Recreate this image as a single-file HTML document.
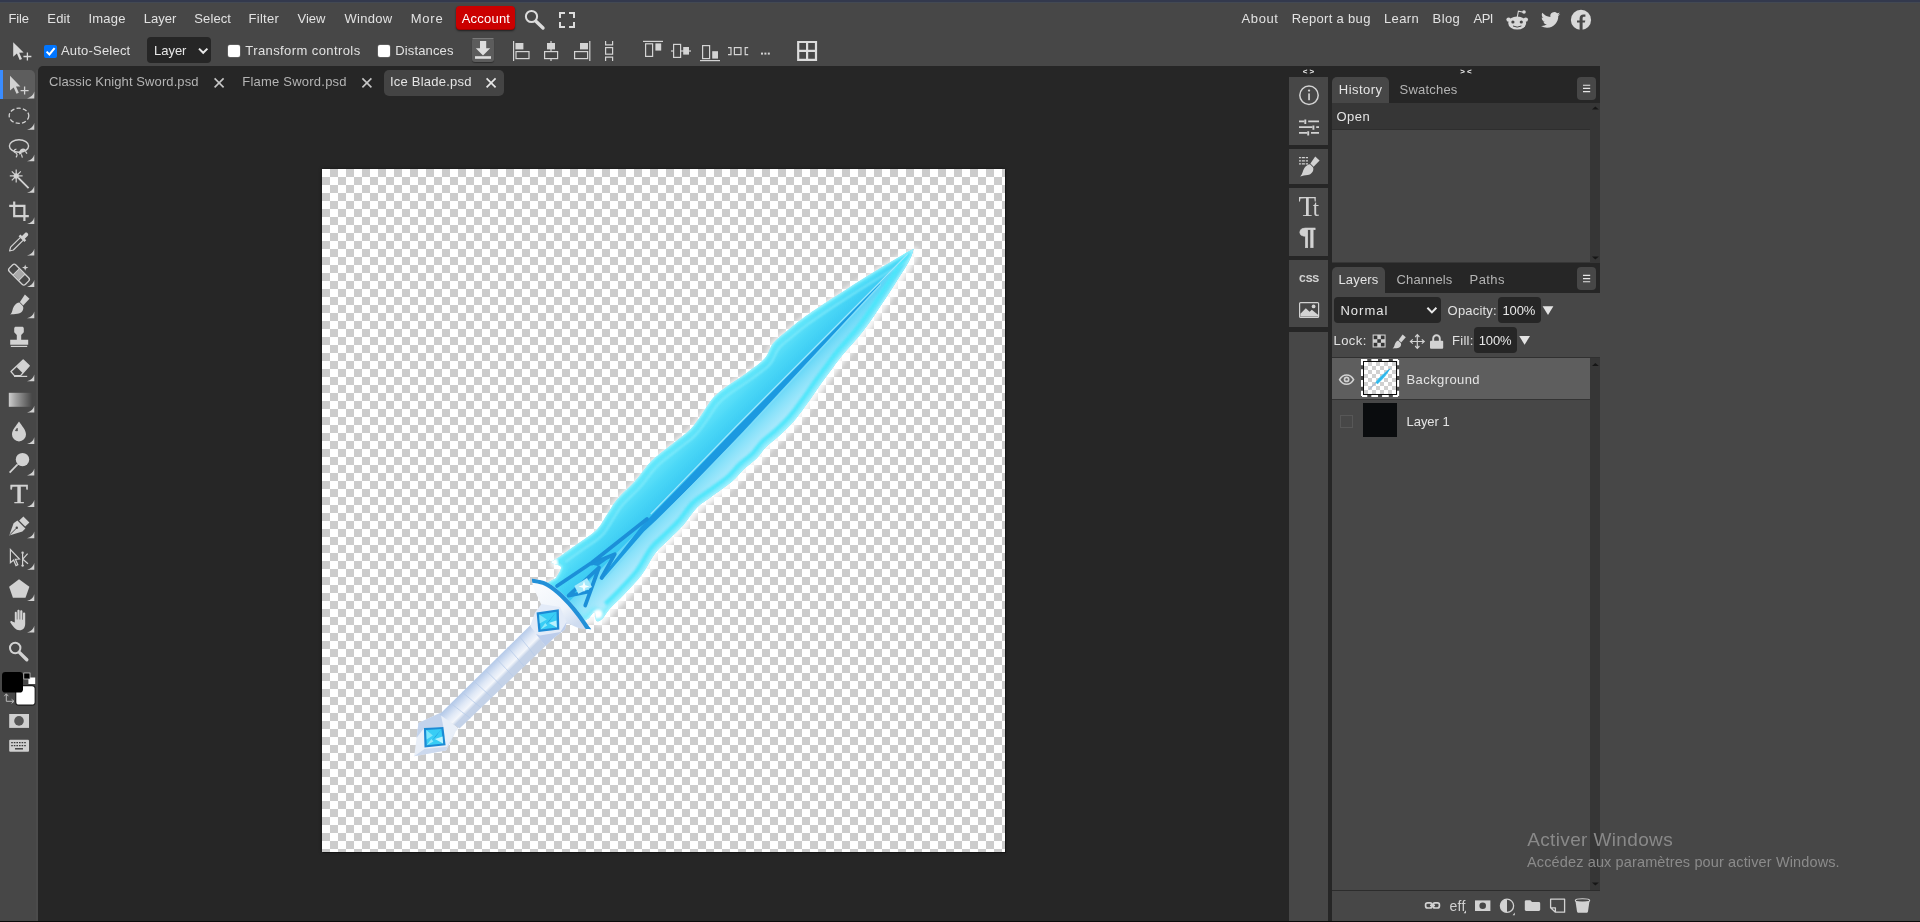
<!DOCTYPE html>
<html lang="en"><head><meta charset="utf-8"><title>Photopea</title>
<style>
html,body{margin:0;padding:0}
body{width:1920px;height:922px;overflow:hidden;background:#474747;position:relative;font-family:"Liberation Sans",sans-serif}
.b{position:absolute}
.t{position:absolute;white-space:pre;line-height:20px;font-family:"Liberation Sans",sans-serif}
svg{position:absolute;overflow:visible}

</style></head>
<body>
<!-- window top strip -->
<div class="b" style="left:0;top:0;width:1920px;height:2px;background:#33394d"></div>
<div class="b" style="left:0;top:2px;width:1920px;height:1px;background:#434953"></div>
<!-- dark workspace -->
<div class="b" style="left:38px;top:66px;width:1562px;height:856px;background:#262626;border-top-left-radius:5px"></div>
<div class="b" style="left:36px;top:70px;width:2px;height:852px;background:#4b4b4b"></div>
<!-- account button -->
<div class="b" style="left:456px;top:6px;width:59px;height:24px;background:#cb0000;border-radius:4px;box-shadow:0 1px 2px rgba(0,0,0,.55), inset 0 -1px 0 rgba(0,0,0,.18)"></div>
<!-- options bar controls -->
<div class="b" style="left:44px;top:45px;width:13px;height:13px;background:#0075ff;border-radius:2px"></div>
<div class="b" style="left:147px;top:37px;width:64px;height:26px;background:#262626;border-radius:4px"></div>
<div class="b" style="left:228px;top:45px;width:12px;height:12px;background:#fff;border-radius:2px;box-shadow:0 0 0 .5px #767676"></div>
<div class="b" style="left:378px;top:45px;width:12px;height:12px;background:#fff;border-radius:2px;box-shadow:0 0 0 .5px #767676"></div>
<div class="b" style="left:472px;top:38px;width:22px;height:24px;background:#5c5c5c;border-radius:3px;box-shadow:0 1px 1px rgba(0,0,0,.35)"></div>
<!-- active tool highlight -->
<div class="b" style="left:0;top:70px;width:35px;height:29px;background:#5d5d5d;border-radius:0 5px 5px 0"></div>
<div class="b" style="left:0;top:70px;width:3px;height:29px;background:#3a8cff"></div>
<!-- document tabs -->
<div class="b" style="left:384px;top:70px;width:120px;height:26px;background:#444444;border-radius:5px"></div>
<!-- canvas -->
<div class="b" style="left:322px;top:169px;width:683px;height:683px;background-color:#fff;background-image:conic-gradient(#ccc 0 25%,#fff 0 50%,#ccc 0 75%,#fff 0);background-size:16px 16px;box-shadow:1px 1px 0 #151515, 0 0 3px rgba(0,0,0,.5)"></div>
<!-- right icon column -->
<div class="b" style="left:1289px;top:77px;width:39px;height:68px;background:#474747"></div>
<div class="b" style="left:1289px;top:149px;width:39px;height:35px;background:#474747"></div>
<div class="b" style="left:1289px;top:188px;width:39px;height:68px;background:#474747"></div>
<div class="b" style="left:1289px;top:260px;width:39px;height:67px;background:#474747"></div>
<div class="b" style="left:1289px;top:332px;width:39px;height:589px;background:#474747"></div>
<!-- history panel -->
<div class="b" style="left:1332px;top:77px;width:57px;height:26px;background:#474747;border-radius:5px 5px 0 0"></div>
<div class="b" style="left:1577px;top:77px;width:19px;height:23px;background:#474747;border-radius:4px"></div>
<div class="b" style="left:1332px;top:103px;width:268px;height:160px;background:#363636"></div>
<div class="b" style="left:1332px;top:130px;width:258px;height:132px;background:#474747"></div>
<div class="b" style="left:1332px;top:129px;width:258px;height:1px;background:#2e2e2e"></div>
<!-- layers panel -->
<div class="b" style="left:1332px;top:267px;width:53px;height:26px;background:#474747;border-radius:5px 5px 0 0"></div>
<div class="b" style="left:1577px;top:267px;width:19px;height:23px;background:#474747;border-radius:4px"></div>
<div class="b" style="left:1332px;top:293px;width:268px;height:628px;background:#474747"></div>
<div class="b" style="left:1334px;top:297px;width:107px;height:26px;background:#262626;border-radius:4px"></div>
<div class="b" style="left:1498px;top:297px;width:43px;height:26px;background:#262626;border-radius:4px"></div>
<div class="b" style="left:1474px;top:327px;width:43px;height:26px;background:#262626;border-radius:4px"></div>
<!-- layer list -->
<div class="b" style="left:1332px;top:357px;width:268px;height:1px;background:#303030"></div>
<div class="b" style="left:1332px;top:358px;width:258px;height:41px;background:#5e5e5e"></div>
<div class="b" style="left:1332px;top:399px;width:258px;height:1px;background:#333"></div>
<div class="b" style="left:1590px;top:358px;width:10px;height:532px;background:#363636"></div>
<div class="b" style="left:1332px;top:890px;width:268px;height:1px;background:#2c2c2c"></div>
<!-- layer thumbs -->
<div class="b" style="left:1361px;top:359px;width:38px;height:38px;background:#4d4d4d"></div>
<div class="b" style="left:1363px;top:361px;width:34px;height:34px;background:#0c0c0c"></div>
<div class="b" style="left:1364px;top:362px;width:32px;height:32px;background-color:#fff;background-image:conic-gradient(#d0d0d0 0 25%,#fff 0 50%,#d0d0d0 0 75%,#fff 0);background-size:8px 8px"></div>
<div class="b" style="left:1363px;top:403px;width:34px;height:34px;background:#0a0c0e"></div>
<div class="b" style="left:1340px;top:415px;width:13px;height:13px;border:1px solid #575757;box-sizing:border-box"></div>
<!-- bottom edge -->
<div class="b" style="left:0;top:921px;width:1920px;height:1px;background:#0b0b0b"></div>

<svg style="left:322px;top:169px" width="683" height="683" viewBox="322 169 683 683">
<defs>
<clipPath id="bc"><path d="M556.0 578.0C556.8 576.2 561.8 569.6 561.0 567.0C560.2 564.4 551.7 564.3 551.5 562.5C551.3 560.7 555.7 559.5 560.0 556.4C564.3 553.3 571.2 548.4 577.3 544.0C583.4 539.6 591.3 535.2 596.4 530.0C601.5 524.8 604.5 518.2 608.0 513.0C611.5 507.8 612.9 504.2 617.4 499.0C621.9 493.8 629.8 487.1 634.7 481.6C639.6 476.1 643.5 470.1 647.0 466.0C650.5 461.9 651.2 461.1 655.5 457.3C659.8 453.5 667.2 448.0 673.0 443.4C678.8 438.8 685.4 434.4 690.2 429.5C695.0 424.6 698.3 419.2 702.0 414.0C705.7 408.8 708.8 402.8 712.6 398.5C716.4 394.2 718.9 392.3 724.7 388.0C730.5 383.7 740.6 377.4 747.3 372.5C753.9 367.6 760.3 363.5 764.6 358.6C768.9 353.7 769.5 347.6 773.3 343.0C777.1 338.4 782.3 334.9 787.2 330.8C792.1 326.7 795.1 323.9 802.6 318.5C810.1 313.1 819.6 306.7 832.0 298.6C844.4 290.5 863.6 278.3 877.2 270.0C890.8 261.7 907.5 252.3 913.6 248.8L913.6 248.8C912.8 251.0 913.1 253.8 908.5 262.0C903.9 270.1 893.5 286.2 886.0 297.7C878.5 309.1 870.6 321.1 863.3 330.7C856.0 340.3 847.5 348.7 842.0 355.5C836.5 362.3 833.9 366.3 830.0 371.6C826.1 376.9 821.9 382.5 818.5 387.2C815.1 391.9 813.9 394.4 809.8 400.0C805.7 405.6 799.0 415.2 794.0 421.0C789.0 426.8 784.7 430.7 780.0 435.0C775.3 439.3 769.8 443.2 766.0 447.0C762.2 450.8 760.7 454.3 757.0 458.0C753.3 461.7 748.2 465.1 744.0 469.0C739.8 472.9 737.5 476.9 732.0 481.6C726.5 486.3 716.8 492.7 711.0 497.0C705.2 501.3 701.6 502.9 697.0 507.6C692.4 512.3 687.9 519.8 683.3 525.0C678.7 530.2 674.0 534.3 669.4 538.9C664.8 543.5 660.1 546.7 655.5 552.7C650.9 558.7 646.8 568.0 641.5 575.0C636.2 582.0 629.2 588.9 624.0 594.5C618.8 600.1 613.7 604.3 610.0 608.4C606.3 612.5 604.3 616.9 602.0 619.0C599.7 621.1 597.6 622.0 596.4 620.8C595.2 619.6 595.8 612.5 594.6 612.0C593.4 611.5 589.9 617.0 589.0 618.0L583 622L567 608L554 595L545 584Z"/></clipPath>
<clipPath id="gc"><path d="M531.7 578.4C534.1 579.0 541.3 579.7 545.8 581.7C550.3 583.7 554.6 587.0 558.8 590.4C562.9 593.8 567.1 598.3 570.7 602.3C574.3 606.3 577.6 610.4 580.5 614.2C583.4 618.0 586.2 622.5 588.0 625.0C589.8 627.5 590.8 628.7 591.3 629.4L591.3 629.4C589.3 629.2 583.2 629.2 579.4 628.3C575.6 627.4 571.8 624.4 568.6 624.0C565.4 623.6 563.4 627.0 560.0 626.0C556.6 625.0 551.1 621.5 548.0 618.0C544.9 614.5 543.1 608.3 541.5 605.0C539.9 601.7 539.6 601.0 538.2 598.0C536.8 595.0 534.4 590.3 533.3 587.0C532.2 583.7 532.0 579.8 531.7 578.4Z"/></clipPath>
<clipPath id="pc"><path d="M530.6 625.0L439.5 714.5L459.5 728.5L545.8 645.7Z"/></clipPath>
<linearGradient id="gu" gradientUnits="userSpaceOnUse" x1="676" y1="445" x2="700" y2="469">
<stop offset="0" stop-color="#62e4fa"/><stop offset=".5" stop-color="#47d5f6"/><stop offset="1" stop-color="#3ac8f2"/></linearGradient>
<linearGradient id="gl" gradientUnits="userSpaceOnUse" x1="700" y1="469" x2="724" y2="493">
<stop offset="0" stop-color="#62d6f7"/><stop offset=".35" stop-color="#8ae2fa"/><stop offset=".75" stop-color="#b0eafc"/><stop offset="1" stop-color="#bdf0fd"/></linearGradient>
<linearGradient id="gg" gradientUnits="userSpaceOnUse" x1="480" y1="666" x2="497" y2="683">
<stop offset="0" stop-color="#9db8df"/><stop offset=".35" stop-color="#bdd0ec"/><stop offset=".62" stop-color="#dfe8f6"/><stop offset=".86" stop-color="#f3f6fb"/><stop offset="1" stop-color="#c4d2e8"/></linearGradient>
<linearGradient id="gd" gradientUnits="userSpaceOnUse" x1="545" y1="585" x2="575" y2="625">
<stop offset="0" stop-color="#f9fbfe"/><stop offset=".6" stop-color="#eef3fa"/><stop offset="1" stop-color="#cfdcf0"/></linearGradient>
<linearGradient id="gm" x1="0" y1="0" x2="1" y2="1">
<stop offset="0" stop-color="#7fe6fb"/><stop offset=".45" stop-color="#35b4ea"/><stop offset=".55" stop-color="#2aa2e2"/><stop offset="1" stop-color="#b5f1fd"/></linearGradient>
<filter id="soft" x="-5%" y="-5%" width="110%" height="110%"><feGaussianBlur stdDeviation=".6"/></filter>
<filter id="b3" x="-10%" y="-10%" width="120%" height="120%"><feGaussianBlur stdDeviation="2.5"/></filter>
<filter id="b1" x="-10%" y="-10%" width="120%" height="120%"><feGaussianBlur stdDeviation="1"/></filter>
</defs>
<g filter="url(#soft)">
<path d="M440.5 712.8L418.5 723.0L414.2 756.2L446.0 750.5L455.7 731.5L458.5 728.5Z" fill="#e9eff8"/>
<path d="M440.5 712.8L418.5 723.0L416.5 738.0L424.0 728.0L443.4 726.9Z" fill="#c3d3ec"/>
<path d="M414.2 756.2L446.0 750.5L455.7 731.5L447.0 746.8L424.5 749.0Z" fill="#ccd9ee"/>
<path d="M530.6 625.0L439.5 714.5L459.5 728.5L545.8 645.7Z" fill="url(#gg)"/>
<path d="M519.2 636.2Q529.1 648.1 535.0 656.1M507.8 647.4Q518.0 658.9 524.2 666.4M496.4 658.6Q506.9 669.7 513.4 676.8M485.1 669.8Q495.9 680.4 502.6 687.1M473.7 680.9Q484.8 691.2 491.9 697.5M462.3 692.1Q473.7 702.0 481.1 707.8M450.9 703.3Q462.6 712.7 470.3 718.1" fill="none" stroke="#b7cbe9" stroke-width="1" opacity=".8"/>
<path d="M423.9 728.0L443.4 726.9L445.6 745.3L424.5 747.5Z" fill="#1d8ad4"/>
<path d="M426.2 730.0L441.4 729.1L443.1 743.5L426.7 745.2Z" fill="#38cdf5"/>
<path d="M441.4 729.1L431.9 740.4L435.9 736.4Z" fill="#1c8fd9"/>
<path d="M443.1 743.5L434.9 738.9L442.6 736.4Z" fill="#b9f2fd"/>
<path d="M426.2 730.0L432.9 735.4L426.7 739.4Z" fill="#7fe6fb"/>
<path d="M426.7 745.2L431.4 738.9L433.4 741.4Z" fill="#8fe9fb"/>
<g transform="translate(1.5 1.5)"><path d="M556.0 578.0C556.8 576.2 561.8 569.6 561.0 567.0C560.2 564.4 551.7 564.3 551.5 562.5C551.3 560.7 555.7 559.5 560.0 556.4C564.3 553.3 571.2 548.4 577.3 544.0C583.4 539.6 591.3 535.2 596.4 530.0C601.5 524.8 604.5 518.2 608.0 513.0C611.5 507.8 612.9 504.2 617.4 499.0C621.9 493.8 629.8 487.1 634.7 481.6C639.6 476.1 643.5 470.1 647.0 466.0C650.5 461.9 651.2 461.1 655.5 457.3C659.8 453.5 667.2 448.0 673.0 443.4C678.8 438.8 685.4 434.4 690.2 429.5C695.0 424.6 698.3 419.2 702.0 414.0C705.7 408.8 708.8 402.8 712.6 398.5C716.4 394.2 718.9 392.3 724.7 388.0C730.5 383.7 740.6 377.4 747.3 372.5C753.9 367.6 760.3 363.5 764.6 358.6C768.9 353.7 769.5 347.6 773.3 343.0C777.1 338.4 782.3 334.9 787.2 330.8C792.1 326.7 795.1 323.9 802.6 318.5C810.1 313.1 819.6 306.7 832.0 298.6C844.4 290.5 863.6 278.3 877.2 270.0C890.8 261.7 907.5 252.3 913.6 248.8L913.6 248.8C912.8 251.0 913.1 253.8 908.5 262.0C903.9 270.1 893.5 286.2 886.0 297.7C878.5 309.1 870.6 321.1 863.3 330.7C856.0 340.3 847.5 348.7 842.0 355.5C836.5 362.3 833.9 366.3 830.0 371.6C826.1 376.9 821.9 382.5 818.5 387.2C815.1 391.9 813.9 394.4 809.8 400.0C805.7 405.6 799.0 415.2 794.0 421.0C789.0 426.8 784.7 430.7 780.0 435.0C775.3 439.3 769.8 443.2 766.0 447.0C762.2 450.8 760.7 454.3 757.0 458.0C753.3 461.7 748.2 465.1 744.0 469.0C739.8 472.9 737.5 476.9 732.0 481.6C726.5 486.3 716.8 492.7 711.0 497.0C705.2 501.3 701.6 502.9 697.0 507.6C692.4 512.3 687.9 519.8 683.3 525.0C678.7 530.2 674.0 534.3 669.4 538.9C664.8 543.5 660.1 546.7 655.5 552.7C650.9 558.7 646.8 568.0 641.5 575.0C636.2 582.0 629.2 588.9 624.0 594.5C618.8 600.1 613.7 604.3 610.0 608.4C606.3 612.5 604.3 616.9 602.0 619.0C599.7 621.1 597.6 622.0 596.4 620.8C595.2 619.6 595.8 612.5 594.6 612.0C593.4 611.5 589.9 617.0 589.0 618.0L583 622L567 608L554 595L545 584Z" fill="#fff" stroke="#ffffff" stroke-width="7" stroke-linejoin="round" filter="url(#b3)" opacity=".85"/></g>
<g clip-path="url(#bc)">
<path d="M556.0 578.0C556.8 576.2 561.8 569.6 561.0 567.0C560.2 564.4 551.7 564.3 551.5 562.5C551.3 560.7 555.7 559.5 560.0 556.4C564.3 553.3 571.2 548.4 577.3 544.0C583.4 539.6 591.3 535.2 596.4 530.0C601.5 524.8 604.5 518.2 608.0 513.0C611.5 507.8 612.9 504.2 617.4 499.0C621.9 493.8 629.8 487.1 634.7 481.6C639.6 476.1 643.5 470.1 647.0 466.0C650.5 461.9 651.2 461.1 655.5 457.3C659.8 453.5 667.2 448.0 673.0 443.4C678.8 438.8 685.4 434.4 690.2 429.5C695.0 424.6 698.3 419.2 702.0 414.0C705.7 408.8 708.8 402.8 712.6 398.5C716.4 394.2 718.9 392.3 724.7 388.0C730.5 383.7 740.6 377.4 747.3 372.5C753.9 367.6 760.3 363.5 764.6 358.6C768.9 353.7 769.5 347.6 773.3 343.0C777.1 338.4 782.3 334.9 787.2 330.8C792.1 326.7 795.1 323.9 802.6 318.5C810.1 313.1 819.6 306.7 832.0 298.6C844.4 290.5 863.6 278.3 877.2 270.0C890.8 261.7 907.5 252.3 913.6 248.8L913.6 248.8C912.8 251.0 913.1 253.8 908.5 262.0C903.9 270.1 893.5 286.2 886.0 297.7C878.5 309.1 870.6 321.1 863.3 330.7C856.0 340.3 847.5 348.7 842.0 355.5C836.5 362.3 833.9 366.3 830.0 371.6C826.1 376.9 821.9 382.5 818.5 387.2C815.1 391.9 813.9 394.4 809.8 400.0C805.7 405.6 799.0 415.2 794.0 421.0C789.0 426.8 784.7 430.7 780.0 435.0C775.3 439.3 769.8 443.2 766.0 447.0C762.2 450.8 760.7 454.3 757.0 458.0C753.3 461.7 748.2 465.1 744.0 469.0C739.8 472.9 737.5 476.9 732.0 481.6C726.5 486.3 716.8 492.7 711.0 497.0C705.2 501.3 701.6 502.9 697.0 507.6C692.4 512.3 687.9 519.8 683.3 525.0C678.7 530.2 674.0 534.3 669.4 538.9C664.8 543.5 660.1 546.7 655.5 552.7C650.9 558.7 646.8 568.0 641.5 575.0C636.2 582.0 629.2 588.9 624.0 594.5C618.8 600.1 613.7 604.3 610.0 608.4C606.3 612.5 604.3 616.9 602.0 619.0C599.7 621.1 597.6 622.0 596.4 620.8C595.2 619.6 595.8 612.5 594.6 612.0C593.4 611.5 589.9 617.0 589.0 618.0L583 622L567 608L554 595L545 584Z" fill="url(#gu)"/>
<path d="M925.0 236.9L540.0 631.5L660.0 751.5L1045.0 366.5Z" fill="url(#gl)"/>
<path d="M556.0 578.0C556.8 576.2 561.8 569.6 561.0 567.0C560.2 564.4 551.7 564.3 551.5 562.5C551.3 560.7 555.7 559.5 560.0 556.4C564.3 553.3 571.2 548.4 577.3 544.0C583.4 539.6 591.3 535.2 596.4 530.0C601.5 524.8 604.5 518.2 608.0 513.0C611.5 507.8 612.9 504.2 617.4 499.0C621.9 493.8 629.8 487.1 634.7 481.6C639.6 476.1 643.5 470.1 647.0 466.0C650.5 461.9 651.2 461.1 655.5 457.3C659.8 453.5 667.2 448.0 673.0 443.4C678.8 438.8 685.4 434.4 690.2 429.5C695.0 424.6 698.3 419.2 702.0 414.0C705.7 408.8 708.8 402.8 712.6 398.5C716.4 394.2 718.9 392.3 724.7 388.0C730.5 383.7 740.6 377.4 747.3 372.5C753.9 367.6 760.3 363.5 764.6 358.6C768.9 353.7 769.5 347.6 773.3 343.0C777.1 338.4 782.3 334.9 787.2 330.8C792.1 326.7 795.1 323.9 802.6 318.5C810.1 313.1 819.6 306.7 832.0 298.6C844.4 290.5 863.6 278.3 877.2 270.0C890.8 261.7 907.5 252.3 913.6 248.8L913.6 248.8C912.8 251.0 913.1 253.8 908.5 262.0C903.9 270.1 893.5 286.2 886.0 297.7C878.5 309.1 870.6 321.1 863.3 330.7C856.0 340.3 847.5 348.7 842.0 355.5C836.5 362.3 833.9 366.3 830.0 371.6C826.1 376.9 821.9 382.5 818.5 387.2C815.1 391.9 813.9 394.4 809.8 400.0C805.7 405.6 799.0 415.2 794.0 421.0C789.0 426.8 784.7 430.7 780.0 435.0C775.3 439.3 769.8 443.2 766.0 447.0C762.2 450.8 760.7 454.3 757.0 458.0C753.3 461.7 748.2 465.1 744.0 469.0C739.8 472.9 737.5 476.9 732.0 481.6C726.5 486.3 716.8 492.7 711.0 497.0C705.2 501.3 701.6 502.9 697.0 507.6C692.4 512.3 687.9 519.8 683.3 525.0C678.7 530.2 674.0 534.3 669.4 538.9C664.8 543.5 660.1 546.7 655.5 552.7C650.9 558.7 646.8 568.0 641.5 575.0C636.2 582.0 629.2 588.9 624.0 594.5C618.8 600.1 613.7 604.3 610.0 608.4C606.3 612.5 604.3 616.9 602.0 619.0C599.7 621.1 597.6 622.0 596.4 620.8C595.2 619.6 595.8 612.5 594.6 612.0C593.4 611.5 589.9 617.0 589.0 618.0L583 622L567 608L554 595L545 584Z" fill="none" stroke="#62eafc" stroke-width="9" stroke-linejoin="round" filter="url(#b3)" opacity=".7"/>
<g transform="translate(5.500 5.500)"><path d="M560.0 556.4C562.9 554.3 571.2 548.4 577.3 544.0C583.4 539.6 591.3 535.2 596.4 530.0C601.5 524.8 604.5 518.2 608.0 513.0C611.5 507.8 612.9 504.2 617.4 499.0C621.9 493.8 629.8 487.1 634.7 481.6C639.6 476.1 643.5 470.1 647.0 466.0C650.5 461.9 651.2 461.1 655.5 457.3C659.8 453.5 667.2 448.0 673.0 443.4C678.8 438.8 685.4 434.4 690.2 429.5C695.0 424.6 698.3 419.2 702.0 414.0C705.7 408.8 708.8 402.8 712.6 398.5C716.4 394.2 718.9 392.3 724.7 388.0C730.5 383.7 740.6 377.4 747.3 372.5C753.9 367.6 760.3 363.5 764.6 358.6C768.9 353.7 769.5 347.6 773.3 343.0C777.1 338.4 782.3 334.9 787.2 330.8C792.1 326.7 795.1 323.9 802.6 318.5C810.1 313.1 819.6 306.7 832.0 298.6C844.4 290.5 863.6 278.3 877.2 270.0C890.8 261.7 907.5 252.3 913.6 248.8" fill="none" stroke="#8aeefc" stroke-width="2" filter="url(#b1)" opacity=".75"/></g>
<g transform="translate(-4.500 -4.500)"><path d="M913.6 248.8C912.8 251.0 913.1 253.8 908.5 262.0C903.9 270.1 893.5 286.2 886.0 297.7C878.5 309.1 870.6 321.1 863.3 330.7C856.0 340.3 847.5 348.7 842.0 355.5C836.5 362.3 833.9 366.3 830.0 371.6C826.1 376.9 821.9 382.5 818.5 387.2C815.1 391.9 813.9 394.4 809.8 400.0C805.7 405.6 799.0 415.2 794.0 421.0C789.0 426.8 784.7 430.7 780.0 435.0C775.3 439.3 769.8 443.2 766.0 447.0C762.2 450.8 760.7 454.3 757.0 458.0C753.3 461.7 748.2 465.1 744.0 469.0C739.8 472.9 737.5 476.9 732.0 481.6C726.5 486.3 716.8 492.7 711.0 497.0C705.2 501.3 701.6 502.9 697.0 507.6C692.4 512.3 687.9 519.8 683.3 525.0C678.7 530.2 674.0 534.3 669.4 538.9C664.8 543.5 660.1 546.7 655.5 552.7C650.9 558.7 646.8 568.0 641.5 575.0C636.2 582.0 629.2 588.9 624.0 594.5C618.8 600.1 612.3 606.1 610.0 608.4" fill="none" stroke="#4ce6fb" stroke-width="4.500" filter="url(#b1)" opacity=".9"/></g>
<path d="M556.0 578.0C556.8 576.2 561.8 569.6 561.0 567.0C560.2 564.4 551.7 564.3 551.5 562.5C551.3 560.7 555.7 559.5 560.0 556.4C564.3 553.3 571.2 548.4 577.3 544.0C583.4 539.6 591.3 535.2 596.4 530.0C601.5 524.8 604.5 518.2 608.0 513.0C611.5 507.8 612.9 504.2 617.4 499.0C621.9 493.8 629.8 487.1 634.7 481.6C639.6 476.1 643.5 470.1 647.0 466.0C650.5 461.9 651.2 461.1 655.5 457.3C659.8 453.5 667.2 448.0 673.0 443.4C678.8 438.8 685.4 434.4 690.2 429.5C695.0 424.6 698.3 419.2 702.0 414.0C705.7 408.8 708.8 402.8 712.6 398.5C716.4 394.2 718.9 392.3 724.7 388.0C730.5 383.7 740.6 377.4 747.3 372.5C753.9 367.6 760.3 363.5 764.6 358.6C768.9 353.7 769.5 347.6 773.3 343.0C777.1 338.4 782.3 334.9 787.2 330.8C792.1 326.7 795.1 323.9 802.6 318.5C810.1 313.1 819.6 306.7 832.0 298.6C844.4 290.5 863.6 278.3 877.2 270.0C890.8 261.7 907.5 252.3 913.6 248.8L913.6 248.8C912.8 251.0 913.1 253.8 908.5 262.0C903.9 270.1 893.5 286.2 886.0 297.7C878.5 309.1 870.6 321.1 863.3 330.7C856.0 340.3 847.5 348.7 842.0 355.5C836.5 362.3 833.9 366.3 830.0 371.6C826.1 376.9 821.9 382.5 818.5 387.2C815.1 391.9 813.9 394.4 809.8 400.0C805.7 405.6 799.0 415.2 794.0 421.0C789.0 426.8 784.7 430.7 780.0 435.0C775.3 439.3 769.8 443.2 766.0 447.0C762.2 450.8 760.7 454.3 757.0 458.0C753.3 461.7 748.2 465.1 744.0 469.0C739.8 472.9 737.5 476.9 732.0 481.6C726.5 486.3 716.8 492.7 711.0 497.0C705.2 501.3 701.6 502.9 697.0 507.6C692.4 512.3 687.9 519.8 683.3 525.0C678.7 530.2 674.0 534.3 669.4 538.9C664.8 543.5 660.1 546.7 655.5 552.7C650.9 558.7 646.8 568.0 641.5 575.0C636.2 582.0 629.2 588.9 624.0 594.5C618.8 600.1 613.7 604.3 610.0 608.4C606.3 612.5 604.3 616.9 602.0 619.0C599.7 621.1 597.6 622.0 596.4 620.8C595.2 619.6 595.8 612.5 594.6 612.0C593.4 611.5 589.9 617.0 589.0 618.0L583 622L567 608L554 595L545 584Z" fill="none" stroke="#c4f8ff" stroke-width="2" stroke-linejoin="round" filter="url(#b1)" opacity=".85"/>
<path d="M879.9 283.6L818.8 345.0L737.3 426.8L687.3 478.8L651.7 515.2L640.2 527.7L600.3 578.6L602.6 579.6L644.0 531.5L656.4 519.9L692.7 484.2L742.7 432.1L821.2 347.4L880.1 283.9Z" fill="#1a99e0"/>
<path d="M907.6 254.1L879.2 282.9L736.5 426.0L650.7 514.2" fill="none" stroke="#9fe6fc" stroke-width="1.2"/>
<path d="M880.8 284.5L743.5 432.9L657.3 520.8L606.0 578.0" fill="none" stroke="#7fdcf9" stroke-width="1.2"/>
<path d="M647 519L592 562.5L557 586M592 563.5L614.8 554.2L601.5 578M599 567.5L568.6 595.7L588 591.8M599 567.5L585.2 605.5" fill="none" stroke="#1c8fd8" stroke-width="3.700" stroke-linejoin="round" stroke-linecap="round"/>
<path d="M614.8 554.2L591 564.5L598 566Z" fill="#1d93da"/>
<path d="M587 578L574.4 586L578.3 593.7L592 587Z" fill="#a5e9fb"/>
<path d="M584 581L585.3 585.3L589.5 586.5L585.3 587.8L584 592L582.7 587.8L578.5 586.5L582.7 585.3Z" fill="#f4feff"/>
<circle cx="554" cy="562.5" r="4" fill="#fff" filter="url(#b1)"/>
<circle cx="598" cy="614" r="4.5" fill="#fff" filter="url(#b1)"/>
</g>
<path d="M531.7 578.4C534.1 579.0 541.3 579.7 545.8 581.7C550.3 583.7 554.6 587.0 558.8 590.4C562.9 593.8 567.1 598.3 570.7 602.3C574.3 606.3 577.6 610.4 580.5 614.2C583.4 618.0 586.2 622.5 588.0 625.0C589.8 627.5 590.8 628.7 591.3 629.4L591.3 629.4C589.3 629.2 583.2 629.2 579.4 628.3C575.6 627.4 571.8 624.4 568.6 624.0C565.4 623.6 563.4 627.0 560.0 626.0C556.6 625.0 551.1 621.5 548.0 618.0C544.9 614.5 543.1 608.3 541.5 605.0C539.9 601.7 539.6 601.0 538.2 598.0C536.8 595.0 534.4 590.3 533.3 587.0C532.2 583.7 532.0 579.8 531.7 578.4Z" fill="url(#gd)"/>
<g clip-path="url(#gc)"><path d="M531.7 578.4C534.1 579.0 541.3 579.7 545.8 581.7C550.3 583.7 554.6 587.0 558.8 590.4C562.9 593.8 567.1 598.3 570.7 602.3C574.3 606.3 577.6 610.4 580.5 614.2C583.4 618.0 586.2 622.5 588.0 625.0C589.8 627.5 590.8 628.7 591.3 629.4" fill="none" stroke="#2390d8" stroke-width="8.4"/></g>
<path d="M541.5 604.0L535.0 612.5L530.2 626.0L545.5 646.0L555.0 637.0L565.0 629.5L566.6 622.0L560.0 607.0Z" fill="#e3ebf8"/>
<path d="M545.5 646.0L555.0 637.0L565.0 629.5L566.6 622.0L560.5 632.0L540.0 635.5L536.0 634.0Z" fill="#bccdeb"/>
<path d="M536.6 612.6L558.8 609.3L559.3 629.4L538.4 632.1Z" fill="#1d8ad4"/>
<path d="M539.2 614.4L556.5 611.8L556.9 627.5L540.6 629.6Z" fill="#38cdf5"/>
<path d="M556.5 611.8L545.8 624.4L549.8 620.4Z" fill="#1c8fd9"/>
<path d="M556.9 627.5L548.8 622.9L556.4 620.4Z" fill="#b9f2fd"/>
<path d="M539.2 614.4L546.8 619.4L539.7 623.4Z" fill="#7fe6fb"/>
<path d="M540.6 629.6L545.3 622.9L547.3 625.4Z" fill="#8fe9fb"/>
</g>
</svg>
<svg style="left:0;top:0" width="1920" height="922" viewBox="0 0 1920 922">
<defs><linearGradient id="tg" x1="0" x2="1" y1="0" y2="0"><stop offset="0" stop-color="#cdcdcd"/><stop offset=".3" stop-color="#a0a0a0"/><stop offset="1" stop-color="#474747"/></linearGradient></defs>
<!-- ===== menu bar icons ===== -->
<g fill="none" stroke="#dcdcdc">
<circle cx="531.5" cy="16.5" r="5.6" stroke-width="2"/>
<path d="M536.2 21.6L543 28" stroke-width="3.4" stroke-linecap="round"/>
<path d="M560 18V13H565M569 13H574V18M574 22V27H569M565 27H560V22" stroke-width="2"/>
</g>
<!-- reddit -->
<g fill="#d8d8d8">
<ellipse cx="1517.2" cy="23" rx="9" ry="6.6"/>
<circle cx="1508.6" cy="19.6" r="2.2"/><circle cx="1525.8" cy="19.6" r="2.2"/>
<circle cx="1524" cy="12" r="1.8"/>
<path d="M1517.3 17L1518.4 11.2L1523.6 12.2" fill="none" stroke="#d8d8d8" stroke-width="1.1"/>
<circle cx="1512.9" cy="22" r="1.6" fill="#474747"/><circle cx="1521.3" cy="22" r="1.6" fill="#474747"/>
<path d="M1513 26Q1517.2 28.2 1521.4 26" fill="none" stroke="#474747" stroke-width="1"/>
</g>
<!-- twitter -->
<path transform="translate(1541 10.3) scale(.8)" fill="#d8d8d8" d="M23.953 4.57a10 10 0 01-2.825.775 4.958 4.958 0 002.163-2.723c-.951.555-2.005.959-3.127 1.184a4.92 4.92 0 00-8.384 4.482C7.69 8.095 4.067 6.13 1.64 3.162a4.822 4.822 0 00-.666 2.475c0 1.71.87 3.213 2.188 4.096a4.904 4.904 0 01-2.228-.616v.06a4.923 4.923 0 003.946 4.827 4.996 4.996 0 01-2.212.085 4.936 4.936 0 004.604 3.417 9.867 9.867 0 01-6.102 2.105c-.39 0-.779-.023-1.17-.067a13.995 13.995 0 007.557 2.209c9.053 0 13.998-7.496 13.998-13.985 0-.21 0-.42-.015-.63A9.935 9.935 0 0024 4.59z"/>
<!-- facebook -->
<circle cx="1581" cy="19.9" r="10.1" fill="#d8d8d8"/>
<path d="M1579.6 30V22.6H1577V20.6H1579.6V18.4C1579.6 15.8 1581.2 14.4 1583.4 14.4C1584.4 14.4 1585.4 14.6 1585.4 14.6V16.8H1584.1C1582.9 16.8 1582.6 17.5 1582.6 18.3V20.6H1585.3L1584.9 22.6H1582.6V30Z" fill="#474747"/>

<!-- ===== options bar ===== -->
<!-- move tool -->
<g>
<path d="M13.2 42.2L13.2 56.8L16.9 53.6L19.7 60L22 59L19.2 52.8L23.6 52.6Z" fill="#d8d8d8"/>
<path d="M27.4 52.6V60.4M23.4 56.5H31.4" stroke="#d8d8d8" stroke-width="1.3" fill="none"/>
</g>
<!-- checkbox tick -->
<path d="M46.6 51.6L49.4 54.4L54.6 48.2" fill="none" stroke="#fff" stroke-width="2"/>
<!-- select chevron -->
<path d="M199 48.6L203.2 52.8L207.4 48.6" fill="none" stroke="#e8e8e8" stroke-width="2"/>
<!-- download -->
<path d="M472.5 38.5H493.5" stroke="#7a7a7a" stroke-width="1"/>
<path d="M480 41H486.2V48.2H490.2L483 55.4L475.8 48.2H480Z" fill="#dedede"/>
<rect x="475" y="56.2" width="16" height="2.6" fill="#dedede"/>
<!-- align icons -->
<g fill="#d4d4d4" stroke="none">
<rect x="513" y="41" width="1.2" height="20"/>
<rect x="515.4" y="43" width="8" height="6.4"/>
<rect x="547" y="43" width="8" height="6.4"/><rect x="550.4" y="41" width="1.2" height="20"/>
<rect x="580" y="43" width="8" height="6.4"/><rect x="589.2" y="41" width="1.2" height="20"/>
<rect x="643" y="40.8" width="20" height="1.2"/><rect x="655.4" y="43.4" width="5.8" height="7.2"/>
<rect x="683.2" y="47" width="5.8" height="7.6"/><rect x="671" y="50.4" width="20" height="1.2"/>
<rect x="712.2" y="51.2" width="5.8" height="7.4"/><rect x="700" y="60" width="20" height="1.2"/>
<rect x="761" y="52.6" width="2" height="2"/><rect x="764.4" y="52.6" width="2" height="2"/><rect x="767.8" y="52.6" width="2" height="2"/>
</g>
<g fill="#474747" stroke="#d4d4d4" stroke-width="1.2">
<rect x="516" y="51.6" width="13" height="7"/>
<rect x="544.6" y="51.6" width="13" height="7"/>
<rect x="574.6" y="51.6" width="13" height="7"/>
<rect x="605.6" y="47.6" width="7" height="6.6"/>
<rect x="645.6" y="43.8" width="7" height="12.6"/>
<rect x="673.6" y="44.4" width="7" height="13"/>
<rect x="702.6" y="45.6" width="7" height="13"/>
<rect x="734.4" y="47.6" width="6.6" height="7"/>
</g>
<g fill="none" stroke="#d4d4d4" stroke-width="1.2">
<path d="M605.6 41V44.8H612.6V41M605.6 61V57.2H612.6V61"/>
<path d="M728 47.6H731V54.6H728M748.2 47.6H745.2V54.6H748.2"/>
</g>
<!-- grid -->
<path d="M798.2 42H816V59.8H798.2ZM807.1 42V59.8M798.2 50.9H816" fill="none" stroke="#dcdcdc" stroke-width="2.2"/>

<!-- ===== tab close buttons ===== -->
<g fill="none" stroke="#c6c6c6" stroke-width="1.6">
<path d="M214.6 78.4L223.6 87.4M223.6 78.4L214.6 87.4"/>
<path d="M362.4 78.4L371.4 87.4M371.4 78.4L362.4 87.4"/>
</g>
<path d="M486.6 78.4L495.6 87.4M495.6 78.4L486.6 87.4" fill="none" stroke="#e6e6e6" stroke-width="1.7"/>

<!-- ===== left toolbar ===== -->
<g fill="#d2d2d2" stroke="none">
<!-- corner marks for tools with sub-menus -->
<path d="M34.300 91.6Q33 96.9 27 98.4L34.300 98.4Z"/>
<path d="M34.300 123.0Q33 128.3 27 129.8L34.300 129.8Z"/>
<path d="M34.300 154.4Q33 159.7 27 161.2L34.300 161.2Z"/>
<path d="M34.300 185.9Q33 191.2 27 192.7L34.300 192.7Z"/>
<path d="M34.300 217.3Q33 222.6 27 224.1L34.300 224.1Z"/>
<path d="M34.300 248.7Q33 254.0 27 255.5L34.300 255.5Z"/>
<path d="M34.300 280.1Q33 285.4 27 286.9L34.300 286.9Z"/>
<path d="M34.300 311.5Q33 316.8 27 318.3L34.300 318.3Z"/>
<path d="M34.300 374.4Q33 379.7 27 381.2L34.300 381.2Z"/>
<path d="M34.300 405.8Q33 411.1 27 412.6L34.300 412.6Z"/>
<path d="M34.300 437.2Q33 442.5 27 444.0L34.300 444.0Z"/>
<path d="M34.300 468.6Q33 473.9 27 475.4L34.300 475.4Z"/>
<path d="M34.300 500.1Q33 505.4 27 506.9L34.300 506.9Z"/>
<path d="M34.300 531.5Q33 536.8 27 538.3L34.300 538.3Z"/>
<path d="M34.300 562.9Q33 568.2 27 569.7L34.300 569.7Z"/>
<path d="M34.300 594.3Q33 599.6 27 601.1L34.300 601.1Z"/>
<path d="M34.300 625.7Q33 631.0 27 632.5L34.300 632.5Z"/>
</g>

<!-- move -->
<path d="M10 75.8V90.6L13.7 87.4L16.5 93.8L18.8 92.8L16 86.6L20.4 86.4Z" fill="#d2d2d2"/>
<path d="M24.6 86.6V94.6M20.6 90.6H28.6" stroke="#d2d2d2" stroke-width="1.3" fill="none"/>
<!-- ellipse marquee -->
<ellipse cx="19" cy="115.8" rx="9.8" ry="7.6" fill="none" stroke="#d2d2d2" stroke-width="1.3" stroke-dasharray="4.2 2.2"/>
<!-- lasso -->
<g fill="none" stroke="#d2d2d2" stroke-width="1.400">
<ellipse cx="19" cy="146" rx="9.600" ry="6.200"/>
<path d="M16.400 149.200C13.600 149.600 13.200 152 15.400 152.800C17.600 153.600 17.400 155.800 16 157.400" stroke-width="1.200"/>
<path d="M20.400 154.200C19.600 151 22.200 148.600 25 150.200" stroke-width="2.400"/>
<path d="M21.400 154.400L22.400 157.600M25.400 151.400L27 153.600" stroke-width="1.200"/>
</g>
<!-- magic wand -->
<g fill="none" stroke="#d2d2d2">
<path d="M18.6 178.2L28.6 188.2" stroke-width="1.9"/>
<path d="M16.2 169.4V182.4M9.8 175.9H22.6M11.8 171.4L20.8 180.4M20.8 171.4L11.8 180.4" stroke-width="1.2"/>
</g>
<circle cx="16.2" cy="175.9" r="2.6" fill="#d2d2d2"/>
<!-- crop -->
<path d="M14.2 201.4V216.2H28.8M9.2 205.8H24.4V221" fill="none" stroke="#d2d2d2" stroke-width="2.2"/>
<!-- eyedropper -->
<g>
<path d="M20.200 237.600L10.600 247.200L9.600 251L13.400 250L23 240.400" fill="none" stroke="#d2d2d2" stroke-width="1.200" stroke-linejoin="round"/>
<path d="M18.600 236.200L24.400 242L26.200 240.200L24.800 238.800L27.800 235.800C29.400 234.200 26.600 231.400 25 233L22 236L20.400 234.400Z" fill="#d2d2d2"/>
</g>
<!-- healing -->
<g transform="rotate(45 19 274.600)">
<rect x="7.600" y="270" width="22.800" height="9.200" rx="2.400" fill="none" stroke="#d2d2d2" stroke-width="1.300"/>
<rect x="15" y="270.600" width="8" height="8" fill="#d2d2d2" opacity=".7"/>
<path d="M15 270V279.200M23 270V279.200" stroke="#d2d2d2" stroke-width="1"/>
</g>
<path d="M25.200 264.400L26 266.800L28.400 267.600L26 268.400L25.200 270.800L24.400 268.400L22 267.600L24.400 266.800Z" fill="#d2d2d2"/>
<!-- brush -->
<path d="M24.9 294.6L29.5 298.8L23.2 305.6L19.9 302Z" fill="#d2d2d2"/>
<path d="M19.4 302.6L22.8 306C24.6 309.6 21.4 313.6 17.4 313.8C14.6 314 12.4 314.4 10.2 314.6C12.8 312.4 12 309.2 14 306.2C15.4 304.2 17.4 302.6 19.4 302.6Z" fill="#d2d2d2"/>
<!-- stamp -->
<path d="M14.2 328.4C14.2 327.4 15 326.8 16 326.8H22C23 326.8 23.8 327.4 23.8 328.4V332.2L21.2 335V339.8H28.2V344.8H10.2V339.8H16.8V335L14.2 332.2Z" fill="#d2d2d2"/>
<rect x="10.8" y="345.8" width="16.4" height="1.2" fill="#d2d2d2"/>
<!-- eraser -->
<g>
<path d="M23.2 360L29.2 365.8L20.6 375.6H14.4L11 371.6Z" fill="none" stroke="#d2d2d2" stroke-width="1.4" stroke-linejoin="round"/>
<path d="M23.2 360L29.2 365.8L22.8 373.2L16.6 367Z" fill="#d2d2d2"/>
<path d="M14 376.4H27.2" stroke="#d2d2d2" stroke-width="1.2"/>
</g>
<!-- gradient -->
<rect x="8.8" y="392.8" width="23.2" height="14" fill="url(#tg)"/>
<!-- blur drop -->
<path d="M19 421.6C21.6 425.6 26 430 26 434.4A7 7 0 0 1 12 434.4C12 430 16.400 425.6 19 421.6Z" fill="#d2d2d2"/>
<path d="M15.400 430.6L17.200 428.200L17.400 430.800Z" fill="#474747" stroke="#474747" stroke-width=".8"/>
<!-- dodge -->
<circle cx="22.5" cy="459.6" r="6.7" fill="#d2d2d2"/>
<path d="M17.6 464.400L9.600 472.600" stroke="#d2d2d2" stroke-width="1.7"/>
<!-- type -->
<text x="19.100" y="503.300" font-family="Liberation Serif, serif" font-size="27.500" text-anchor="middle" fill="#d2d2d2" stroke="#d2d2d2" stroke-width=".5" transform="translate(19.100 0) scale(1.060 1) translate(-19.100 0)">T</text>
<!-- pen -->
<g>
<path d="M9.200 535.400L13.600 523.200L17.400 520.600L25.400 528.400L22.400 531.600Z" fill="#d2d2d2"/>
<path d="M9.600 535L16.400 528.200" stroke="#474747" stroke-width="1"/>
<circle cx="16.800" cy="527.800" r="1.200" fill="#474747"/>
<path d="M19.200 518.600L23.400 514.400L29.400 520.400L25.200 524.600Z" fill="#d2d2d2" transform="translate(0 2)"/>
</g>
<!-- path select -->
<g fill="none" stroke="#d2d2d2" stroke-width="1.2">
<path d="M10.400 549.600V562.800L13.600 560L16 565.600L17.800 564.800L15.400 559.200L19.400 559Z"/>
<path d="M22.600 553.400V565.200M27.600 553.600L22.800 559.200L28 563.800"/>
</g>
<circle cx="22.600" cy="552.800" r="1.200" fill="#d2d2d2"/><circle cx="22.600" cy="565.600" r="1.200" fill="#d2d2d2"/>
<!-- shape -->
<path d="M19 579.200L29.400 586.800L25.500 597.700H12.900L9.100 586.800Z" fill="#d2d2d2"/>
<!-- hand -->
<path d="M14.800 622.400V612.800C14.800 611.400 16.800 611.400 16.800 612.800V619.400H17.400V610.800C17.400 609.400 19.600 609.400 19.600 610.800V619.400H20.200V611.400C20.200 610 22.400 610 22.400 611.400V619.800H23V613.600C23 612.200 25.200 612.200 25.200 613.600V623.400C25.200 627.400 23.200 630.200 19.400 630.200C15.600 630.200 14.200 628 10.400 622.600C9.600 621.400 11.200 620.400 12.200 621.400Z" fill="#d2d2d2"/>
<!-- zoom -->
<circle cx="15.200" cy="648" r="5.200" fill="none" stroke="#d2d2d2" stroke-width="2"/>
<path d="M19.600 652.600L26.800 659.800" stroke="#d2d2d2" stroke-width="3.400" stroke-linecap="round"/>
<!-- colours -->
<rect x="15.700" y="685.600" width="19.500" height="19.500" rx="3.200" fill="#fff" stroke="#1c1c1c" stroke-width="1.200"/>
<rect x="2" y="672" width="21" height="20.600" rx="3.400" fill="#000"/>
<rect x="28.400" y="677.500" width="6.800" height="6.500" fill="#fff"/>
<rect x="23.800" y="673" width="6.200" height="6" fill="#000" stroke="#d8d8d8" stroke-width=".7"/>
<path d="M6.300 701.300V694.200M4.300 696.200L6.300 693.800L8.300 696.200M6.300 701.300H13.600M11.600 699.300L14 701.300L11.600 703.300" fill="none" stroke="#b8b8b8" stroke-width="1"/>
<!-- quick mask -->
<rect x="9.200" y="714" width="19.800" height="13.900" fill="#cfcfcf"/>
<circle cx="19" cy="720.900" r="4.800" fill="#555"/>
<!-- keyboard -->
<rect x="9.200" y="739.800" width="19.800" height="11.900" rx="1" fill="#cfcfcf"/>
<path d="M11.200 742.600H26.800M11.200 745.600H26.800" stroke="#3a3a3a" stroke-width="1.400" stroke-dasharray="1.600 1"/>
<path d="M15 748.800H23" stroke="#3a3a3a" stroke-width="1.400"/>

<!-- ===== right icon column ===== -->
<text x="1309.600" y="74" font-family="Liberation Sans, sans-serif" font-weight="700" font-size="8" text-anchor="middle" fill="#f0f0f0" letter-spacing="2.2">&lt;&gt;</text>
<text x="1467" y="73.900" font-family="Liberation Sans, sans-serif" font-weight="700" font-size="8" text-anchor="middle" fill="#f0f0f0" letter-spacing="2.2">&gt;&lt;</text>
<!-- info -->
<circle cx="1309" cy="95.200" r="9.200" fill="none" stroke="#d2d2d2" stroke-width="1.500"/>
<rect x="1308.200" y="93.400" width="1.700" height="6.800" fill="#d2d2d2"/><circle cx="1309.050" cy="90.600" r="1.150" fill="#d2d2d2"/>
<!-- sliders -->
<g stroke="#d2d2d2" fill="none">
<path d="M1299 121.300H1304.400M1308.200 121.300H1319M1299 127.100H1312.400M1316.200 127.100H1319M1299 132.900H1307.200M1311 132.900H1319" stroke-width="1.700"/>
<path d="M1305.300 119.600V124M1313.400 125.400V129.800M1308.200 131.200V135.600" stroke-width="1.900"/>
</g>
<!-- brush presets -->
<g>
<path d="M1299 157.700H1308M1299 160.800H1308M1299 163.900H1308" stroke="#d2d2d2" stroke-width="1.300" fill="none"/>
<path d="M1301.400 156.200V165.400M1305.400 156.200V165.400" stroke="#474747" stroke-width=".9" fill="none"/>
<path d="M1315.200 156.400L1319.600 160.400L1313.600 166.800L1310.400 163.600Z" fill="#d2d2d2"/>
<path d="M1310 164.200L1313 167.200C1314.400 170.800 1311.400 174.600 1307.600 175C1305 175.300 1302.600 175.800 1300.200 176.400C1302.800 174 1302.400 171 1304.400 168C1305.800 166 1308 164.200 1310 164.200Z" fill="#d2d2d2"/>
</g>
<!-- character -->
<text x="1298.600" y="215.800" font-family="Liberation Serif, serif" font-size="29" fill="#d2d2d2" letter-spacing="-3.500">T<tspan font-size="22.500">t</tspan></text>
<!-- paragraph -->
<text x="1299" y="244.800" font-family="Liberation Sans, sans-serif" font-weight="700" font-size="23" fill="#d2d2d2" stroke="#d2d2d2" stroke-width=".4" transform="translate(1299.400 0) scale(1.360 1) translate(-1299.400 0)">¶</text>
<!-- css -->
<text x="1309" y="282" font-family="Liberation Mono, monospace" font-weight="700" font-size="11.500" text-anchor="middle" fill="#d2d2d2" letter-spacing="-.3">CSS</text>
<!-- image -->
<rect x="1299.600" y="302.600" width="19" height="14.800" rx="1" fill="none" stroke="#d2d2d2" stroke-width="1.200"/>
<path d="M1300.400 316.600V313.800L1305.800 308.200L1309.600 311.800L1311.800 309.800L1318 314.800V316.600Z" fill="#d2d2d2"/>
<circle cx="1313.600" cy="306.400" r="1.900" fill="#d2d2d2"/>

<!-- ===== panels ===== -->
<g stroke="#e6e6e6" stroke-width="1.100" fill="none">
<path d="M1583 85.200H1590.200M1583 88.400H1590.200M1583 91.600H1590.200"/>
<path d="M1583 275.400H1590.200M1583 278.600H1590.200M1583 281.800H1590.200"/>
</g>
<!-- scrollbar arrows -->
<g fill="#161616">
<path d="M1592 109.600L1595.400 106.600L1598.800 109.600Z"/>
<path d="M1592 256.400L1595.400 259.400L1598.800 256.400Z"/>
<path d="M1592 366L1595.400 363L1598.800 366Z"/>
<path d="M1592 882.600L1595.400 885.600L1598.800 882.600Z"/>
</g>
<!-- select chevron / triangles -->
<path d="M1427.400 307.800L1431.900 312.400L1436.400 307.800" fill="none" stroke="#e8e8e8" stroke-width="2"/>
<path d="M1542.600 306.200H1553.400L1548 315Z" fill="#e4e4e4"/>
<path d="M1519.200 336H1530L1524.600 344.800Z" fill="#e4e4e4"/>
<!-- lock: transparency -->
<rect x="1372.600" y="334.500" width="13" height="13" fill="#cfcfcf"/>
<g fill="#333">
<rect x="1373.700" y="335.600" width="3.600" height="3.600"/><rect x="1380.900" y="335.600" width="3.600" height="3.600"/>
<rect x="1377.300" y="339.200" width="3.600" height="3.600"/>
<rect x="1373.700" y="342.800" width="3.600" height="3.600"/><rect x="1380.900" y="342.800" width="3.600" height="3.600"/>
</g>
<!-- lock: pixels (brush) -->
<path d="M1402.600 334.400L1405.800 337.200L1401.200 342.400L1398.600 340Z" fill="#d2d2d2"/>
<path d="M1398.200 340.600L1400.800 343C1402 345.800 1399.600 348.200 1396.800 348.200C1395.200 348.200 1394 348.400 1392.600 348.600C1394.600 347 1394.200 345 1395.400 343C1396.200 341.600 1397.200 340.800 1398.200 340.600Z" fill="#d2d2d2"/>
<!-- lock: position -->
<g stroke="#d2d2d2" stroke-width="1.200" fill="none">
<path d="M1417.300 335V348M1410.800 341.500H1423.800"/>
<path d="M1415.200 337L1417.300 334.600L1419.400 337M1415.200 346L1417.300 348.400L1419.400 346M1412.800 339.400L1410.400 341.500L1412.800 343.600M1421.800 339.400L1424.200 341.500L1421.800 343.600"/>
</g>
<!-- lock: all -->
<rect x="1430" y="340.800" width="13.200" height="8" rx="1" fill="#d2d2d2"/>
<path d="M1433.200 341V338.600A3.300 3.300 0 0 1 1439.800 338.600V341" fill="none" stroke="#d2d2d2" stroke-width="1.900"/>
<!-- eye -->
<path d="M1339.600 379.600C1343 373.400 1350.200 373.400 1353.600 379.600C1350.200 385.800 1343 385.800 1339.600 379.600Z" fill="none" stroke="#d2d2d2" stroke-width="1.600"/>
<circle cx="1346.600" cy="379.400" r="2.900" fill="#d2d2d2"/><circle cx="1346.600" cy="379.400" r="1.200" fill="#5e5e5e"/>
<!-- thumbnail selection frame -->
<rect x="1362" y="360" width="36.100" height="36.100" fill="none" stroke="#fff" stroke-width="2" stroke-dasharray="5.250 4.100 6.650 4.100 6.650 4.100 5.250 0"/>
<!-- thumbnail sword -->
<path d="M1369.200 389.400L1376 382.600" stroke="#a9b9d0" stroke-width="1.100"/>
<path d="M1375.400 382.200C1379 377.400 1384.600 372.600 1390.800 367.800C1388.200 373.400 1383.600 378.400 1377.600 384.200Z" fill="#3dc4f2"/>
<path d="M1376.600 383.200L1389.600 369.200" stroke="#1f9fe0" stroke-width=".7"/>
<!-- bottom bar -->
<g fill="none" stroke="#d2d2d2">
<rect x="1425.600" y="902.800" width="6.400" height="5.200" rx="2" stroke-width="1.700"/>
<rect x="1433" y="902.800" width="6.400" height="5.200" rx="2" stroke-width="1.700"/>
<path d="M1430 905.400H1435" stroke-width="1.700"/>
</g>
<path d="M1466 913.200V910.200L1463.600 913.200ZM1514.800 915.200V912.600L1512.600 915.200Z" fill="#d2d2d2"/>
<rect x="1475" y="900.400" width="15.400" height="10.600" fill="#d2d2d2"/><circle cx="1482.700" cy="905.700" r="3.300" fill="#474747"/>
<circle cx="1507" cy="905.800" r="6.600" fill="none" stroke="#d2d2d2" stroke-width="1.300"/>
<path d="M1507 899.200A6.600 6.600 0 0 0 1507 912.400Z" fill="#d2d2d2"/>
<path d="M1524.800 901.600C1524.800 900.800 1525.400 900.200 1526.200 900.200H1530.400L1532 902H1538.800C1539.600 902 1540.200 902.600 1540.200 903.400V909.600C1540.200 910.400 1539.600 911 1538.800 911H1526.200C1525.400 911 1524.800 910.400 1524.800 909.600Z" fill="#d2d2d2"/>
<path d="M1550.600 899.200H1564.600V912.200H1555.400L1550.600 907.800ZM1550.600 907.800H1555.400V912.200" fill="none" stroke="#d2d2d2" stroke-width="1.300" stroke-linejoin="round"/>
<path d="M1575.400 900.600H1589.600L1588 911.400C1587.800 912.200 1587.200 912.800 1586.400 912.800H1578.600C1577.800 912.800 1577.200 912.200 1577 911.400Z" fill="#d2d2d2"/>
<ellipse cx="1582.500" cy="900.400" rx="7.200" ry="1.700" fill="#474747" stroke="#d2d2d2" stroke-width="1.100"/>
</svg>

<span class="t" style="left:8.5px;top:8.5px;font-size:13px;letter-spacing:-0.17px;color:#e2e2e2">File</span>
<span class="t" style="left:47.3px;top:8.5px;font-size:13px;letter-spacing:0.17px;color:#e2e2e2">Edit</span>
<span class="t" style="left:88.5px;top:8.5px;font-size:13px;letter-spacing:0.20px;color:#e2e2e2">Image</span>
<span class="t" style="left:143.7px;top:8.5px;font-size:13px;letter-spacing:0.00px;color:#e2e2e2">Layer</span>
<span class="t" style="left:194.3px;top:8.5px;font-size:13px;letter-spacing:0.10px;color:#e2e2e2">Select</span>
<span class="t" style="left:248.5px;top:8.5px;font-size:13px;letter-spacing:0.30px;color:#e2e2e2">Filter</span>
<span class="t" style="left:297.5px;top:8.5px;font-size:13px;letter-spacing:0.00px;color:#e2e2e2">View</span>
<span class="t" style="left:344.5px;top:8.5px;font-size:13px;letter-spacing:0.30px;color:#e2e2e2">Window</span>
<span class="t" style="left:410.7px;top:8.5px;font-size:13px;letter-spacing:0.77px;color:#e2e2e2">More</span>
<span class="t" style="left:461.7px;top:8.5px;font-size:13px;letter-spacing:0.22px;color:#ffffff">Account</span>
<span class="t" style="left:1241.5px;top:8.8px;font-size:13px;letter-spacing:0.62px;color:#e2e2e2">About</span>
<span class="t" style="left:1291.8px;top:8.8px;font-size:13px;letter-spacing:0.31px;color:#e2e2e2">Report a bug</span>
<span class="t" style="left:1383.9px;top:8.8px;font-size:13px;letter-spacing:0.40px;color:#e2e2e2">Learn</span>
<span class="t" style="left:1432.6px;top:8.8px;font-size:13px;letter-spacing:0.37px;color:#e2e2e2">Blog</span>
<span class="t" style="left:1473.6px;top:8.8px;font-size:13px;letter-spacing:-0.60px;color:#e2e2e2">API</span>
<span class="t" style="left:61.0px;top:40.6px;font-size:13px;letter-spacing:0.20px;color:#e2e2e2">Auto-Select</span>
<span class="t" style="left:154.0px;top:40.6px;font-size:13px;letter-spacing:-0.02px;color:#e8e8e8">Layer</span>
<span class="t" style="left:245.3px;top:40.6px;font-size:13px;letter-spacing:0.41px;color:#e2e2e2">Transform controls</span>
<span class="t" style="left:395.2px;top:40.6px;font-size:13px;letter-spacing:0.14px;color:#e2e2e2">Distances</span>
<span class="t" style="left:49.0px;top:72.4px;font-size:13px;letter-spacing:0.09px;color:#b4b4b4">Classic Knight Sword.psd</span>
<span class="t" style="left:242.3px;top:72.4px;font-size:13px;letter-spacing:0.22px;color:#b4b4b4">Flame Sword.psd</span>
<span class="t" style="left:390.0px;top:72.4px;font-size:13px;letter-spacing:0.22px;color:#e4e4e4">Ice Blade.psd</span>
<span class="t" style="left:1338.8px;top:80.0px;font-size:13px;letter-spacing:0.47px;color:#e4e4e4">History</span>
<span class="t" style="left:1399.5px;top:80.0px;font-size:13px;letter-spacing:0.21px;color:#b4b4b4">Swatches</span>
<span class="t" style="left:1336.5px;top:107.0px;font-size:13px;letter-spacing:0.50px;color:#e4e4e4">Open</span>
<span class="t" style="left:1338.4px;top:270.0px;font-size:13px;letter-spacing:0.18px;color:#e4e4e4">Layers</span>
<span class="t" style="left:1396.5px;top:270.0px;font-size:13px;letter-spacing:0.13px;color:#b4b4b4">Channels</span>
<span class="t" style="left:1469.6px;top:270.0px;font-size:13px;letter-spacing:0.40px;color:#b4b4b4">Paths</span>
<span class="t" style="left:1340.4px;top:300.5px;font-size:13px;letter-spacing:1.04px;color:#e8e8e8">Normal</span>
<span class="t" style="left:1447.6px;top:300.5px;font-size:13px;letter-spacing:0.20px;color:#e2e2e2">Opacity:</span>
<span class="t" style="left:1502.4px;top:300.5px;font-size:13px;letter-spacing:-0.10px;color:#e8e8e8">100%</span>
<span class="t" style="left:1333.6px;top:330.8px;font-size:13px;letter-spacing:0.40px;color:#e2e2e2">Lock:</span>
<span class="t" style="left:1452.1px;top:330.8px;font-size:13px;letter-spacing:0.25px;color:#e2e2e2">Fill:</span>
<span class="t" style="left:1478.7px;top:330.8px;font-size:13px;letter-spacing:-0.13px;color:#e8e8e8">100%</span>
<span class="t" style="left:1406.5px;top:369.8px;font-size:13px;letter-spacing:0.41px;color:#e4e4e4">Background</span>
<span class="t" style="left:1406.5px;top:411.8px;font-size:13px;letter-spacing:-0.03px;color:#e4e4e4">Layer 1</span>
<span class="t" style="left:1449.6px;top:895.8px;font-size:14px;letter-spacing:0.20px;color:#d0d0d0">eff</span>
<span class="t" style="left:1527.2px;top:830.3px;font-size:19px;letter-spacing:0.36px;color:#898989">Activer Windows</span>
<span class="t" style="left:1527.0px;top:851.9px;font-size:14.5px;letter-spacing:0.13px;color:#8b8b8b">Accédez aux paramètres pour activer Windows.</span>
</body></html>
